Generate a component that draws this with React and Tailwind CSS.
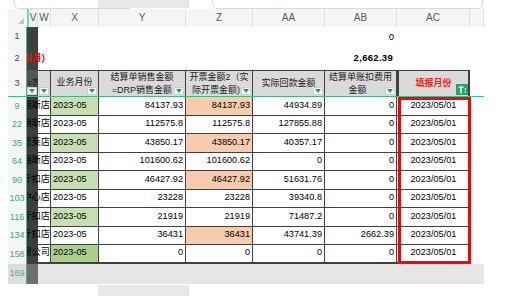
import React from "react";

const rows = [
  { n: 9, name: "期斯店", g: 1, y: "84137.93", z: "84137.93", zs: 1, aa: "44934.89", ab: "0" },
  { n: 22, name: "期斯店", g: 0, y: "112575.8", z: "112575.8", zs: 0, aa: "127855.88", ab: "0" },
  { n: 35, name: "思莱店", g: 1, y: "43850.17", z: "43850.17", zs: 1, aa: "40357.17", ab: "0" },
  { n: 64, name: "期斯店", g: 0, y: "101600.62", z: "101600.62", zs: 0, aa: "0", ab: "0" },
  { n: 90, name: "斤扣店", g: 1, y: "46427.92", z: "46427.92", zs: 1, aa: "51631.76", ab: "0" },
  { n: 103, name: "中心店", g: 0, y: "23228", z: "23228", zs: 0, aa: "39340.8", ab: "0" },
  { n: 116, name: "斤扣店", g: 1, y: "21919", z: "21919", zs: 0, aa: "71487.2", ab: "0" },
  { n: 134, name: "斤扣店", g: 0, y: "36431", z: "36431", zs: 1, aa: "43741.39", ab: "2662.39" },
  { n: 158, name: "限公司", g: 2, y: "0", z: "0", zs: 0, aa: "0", ab: "0" },
];

function FilterBtn() {
  return (
    <span className="absolute right-[1px] bottom-[1px] w-[10px] h-[8px] bg-white border border-[#cfcfcf] flex items-center justify-center">
      <svg width="6" height="4" viewBox="0 0 6 4">
        <path d="M0 0h6L3 4z" fill="#1f9d62" />
      </svg>
    </span>
  );
}

function FilterOn() {
  return (
    <span className="absolute right-[0px] bottom-[1px] w-[12px] h-[11px] bg-[#27a468] flex items-center justify-center">
      <svg width="9" height="8" viewBox="0 0 9 8">
        <rect x="0.5" y="0.5" width="5" height="1.4" fill="white" />
        <rect x="2.3" y="0.5" width="1.4" height="7" fill="white" />
        <rect x="6.6" y="2.4" width="1.4" height="1.3" fill="white" />
        <rect x="6.6" y="5.2" width="1.4" height="1.3" fill="white" />
      </svg>
    </span>
  );
}

const colLetters = [
  ["V", "w-[11px]"],
  ["W", "w-[13px]"],
  ["X", "w-[48px]"],
  ["Y", "w-[87px]"],
  ["Z", "w-[67px]"],
  ["AA", "w-[72px]"],
  ["AB", "w-[72px]"],
  ["AC", "w-[73px]"],
  ["", "w-[14px]"],
];

export default function App() {
  return (
    <div className="w-[513px] h-[296px] bg-white overflow-hidden font-['Liberation_Sans','Noto_Sans_CJK_SC',sans-serif] text-black">
      {/* top strip */}
      <div className="relative h-[9px] flex">
        <div className="ml-[14px] w-[119px] h-[9px] border-b border-x border-[#dadada] rounded-b-[5px]" />
        <div className="ml-[79px] w-[271px] h-[9px] border-b border-x border-[#dadada] rounded-b-[5px]" />
        <div className="absolute left-[98px] top-0 w-[91px] h-[8px] bg-[#e8e8e8]" />
      </div>

      {/* column letters band */}
      <div className="ml-[8px] w-[476px] h-[18px] bg-[#f4f5f7] flex text-[10px] text-[#5a5a5a] leading-[18px]">
        <div className="w-[19px] relative">
          <svg className="absolute right-[3px] bottom-[3px]" width="6" height="6" viewBox="0 0 6 6">
            <path d="M6 0V6H0z" fill="#c4c4c4" />
          </svg>
        </div>
        {colLetters.map(([l, w], i) => (
          <div
            key={i}
            className={`${w} text-center border-r border-[#e0e0e0] ${i === 0 ? "border-l-2 border-l-[#7fd3ad] bg-[#e8f3ee]" : ""}`}
          >
            {l}
          </div>
        ))}
      </div>

      {/* row 1 */}
      <div className="ml-[8px] w-[476px] h-[20px] flex">
        <div className="w-[19px] bg-[#f4f5f7] border-r border-[#3dba8a] text-[9px] text-[#444] flex items-center justify-center">1</div>
        <div className="w-[11px] bg-[#404040]" />
        <div className="w-[13px]" />
        <div className="w-[274px]" />
        <div className="w-[72px] text-[9.5px] flex items-center justify-end pr-[3px]">0</div>
        <div className="w-[73px]" />
        <div className="w-[14px]" />
      </div>

      {/* row 2 */}
      <div className="ml-[8px] w-[476px] h-[23px] flex">
        <div className="w-[19px] bg-[#f4f5f7] border-r border-[#3dba8a] text-[9px] text-[#444] flex items-center justify-center">2</div>
        <div className="w-[24px] bg-[linear-gradient(to_right,#404040_11px,white_11px)] overflow-hidden flex items-center justify-end pr-[6px] whitespace-nowrap">
          <span className="text-[9.5px] font-bold text-[#ff0000]">（填报月)</span>
        </div>
        <div className="w-[274px]" />
        <div className="w-[72px] text-[9.5px] font-bold tracking-[0.3px] flex items-center justify-end pr-[4px]">2,662.39</div>
        <div className="w-[73px]" />
        <div className="w-[14px]" />
      </div>

      {/* row 3 header */}
      <div className="ml-[8px] w-[476px] h-[26px] flex text-[9px] leading-[13px] text-[#222]">
        <div className="w-[19px] bg-[#f4f5f7] border-r border-[#3dba8a] text-[9px] text-[#444] flex items-center justify-center">3</div>
        <div className="w-[11px] bg-[#555] relative overflow-visible">
          <span className="absolute right-[-12px] top-[7px] whitespace-nowrap">≡客称</span>
          <FilterBtn />
        </div>
        <div className="w-[13px] bg-[#dadada] border-t border-r border-[#404040] relative">
          <FilterBtn />
        </div>
        <div className="w-[48px] bg-[#dadada] border-t border-r border-[#404040] relative flex items-center justify-center pb-[2px]">
          业务月份
          <FilterBtn />
        </div>
        <div className="w-[87px] bg-[#dadada] border-t border-r border-[#404040] relative flex flex-col items-center justify-center">
          <span>结算单销售金额</span>
          <span>=DRP销售金额</span>
          <FilterBtn />
        </div>
        <div className="w-[67px] bg-[#dadada] border-t border-r border-[#404040] relative flex flex-col items-center justify-center">
          <span className="whitespace-nowrap">开票金额2（实</span>
          <span className="pr-[6px]">际开票金额)</span>
          <FilterBtn />
        </div>
        <div className="w-[72px] bg-[#dadada] border-t border-r border-[#404040] relative flex items-center justify-center pb-[1px]">
          实际回款金额
          <FilterBtn />
        </div>
        <div className="w-[72px] bg-[#dadada] border-t border-r border-[#404040] relative flex flex-col items-center justify-center">
          <span className="whitespace-nowrap">结算单账扣费用</span>
          <span className="pr-[6px]">金额</span>
          <FilterBtn />
        </div>
        <div className="w-[73px] bg-[#dadada] border-t border-x-2 border-[#404040] relative flex items-center justify-center text-[#ff1a1a] font-bold pb-[1px]">
          填报月份
          <FilterOn />
        </div>
        <div className="w-[14px]" />
      </div>

      {/* frozen line */}
      <div className="ml-[8px] w-[476px] h-[1px] bg-[#3dba8a]" />

      {/* data rows */}
      <div className="ml-[8px] w-[476px] relative">
        {rows.map((r, i) => {
          const last = i === rows.length - 1;
          const bb = last ? "border-b-2" : "border-b";
          const xbg = r.g === 1 ? "bg-[#c6e0b4]" : r.g === 2 ? "bg-[#a9d08e]" : "bg-white";
          return (
            <div key={r.n} className="h-[18.5px] flex text-[9.2px]">
              <div className="w-[19px] bg-[#f4f5f7] border-r border-[#3dba8a] text-[9px] text-[#3aa981] flex items-center justify-center">
                {r.n}
              </div>
              <div className={`w-[24px] bg-[linear-gradient(to_right,#3d3d3d_11px,white_11px)] overflow-hidden flex items-center justify-end whitespace-nowrap ${bb} border-r border-[#404040]`}>
                <span>{r.name}</span>
              </div>
              <div className={`w-[48px] ${xbg} ${bb} border-r border-[#404040] flex items-center pl-[2px]`}>2023-05</div>
              <div className={`w-[87px] ${bb} border-r border-[#404040] flex items-center justify-end pr-[2px]`}>{r.y}</div>
              <div className={`w-[67px] ${r.zs ? "bg-[#f8cbad]" : ""} ${bb} border-r border-[#404040] flex items-center justify-end pr-[2px]`}>{r.z}</div>
              <div className={`w-[72px] ${bb} border-r border-[#404040] flex items-center justify-end pr-[2px]`}>{r.aa}</div>
              <div className={`w-[72px] ${bb} border-r border-[#404040] flex items-center justify-end pr-[2px]`}>{r.ab}</div>
              <div className={`w-[73px] ${bb} border-[#404040] flex items-center justify-center`}>2023/05/01</div>
              <div className="w-[14px]" />
            </div>
          );
        })}
        <div className="absolute left-[390px] top-0 w-[73px] h-[167px] border-[3px] border-[#ff0000] pointer-events-none" />
      </div>

      {/* row 169 */}
      <div className="ml-[8px] w-[476px] h-[20px] flex bg-[#e6e6e6]">
        <div className="w-[19px] bg-[#dcdde1] border-r border-[#3dba8a] text-[9px] text-[#5aa994] flex items-center justify-center">169</div>
        <div className="w-[11px] bg-[#6e6e6e]" />
      </div>

      {/* bottom */}
      <div className="ml-[98px] mt-[1px] w-[91px] h-[11px] bg-[#e8e8e8]" />
    </div>
  );
}
